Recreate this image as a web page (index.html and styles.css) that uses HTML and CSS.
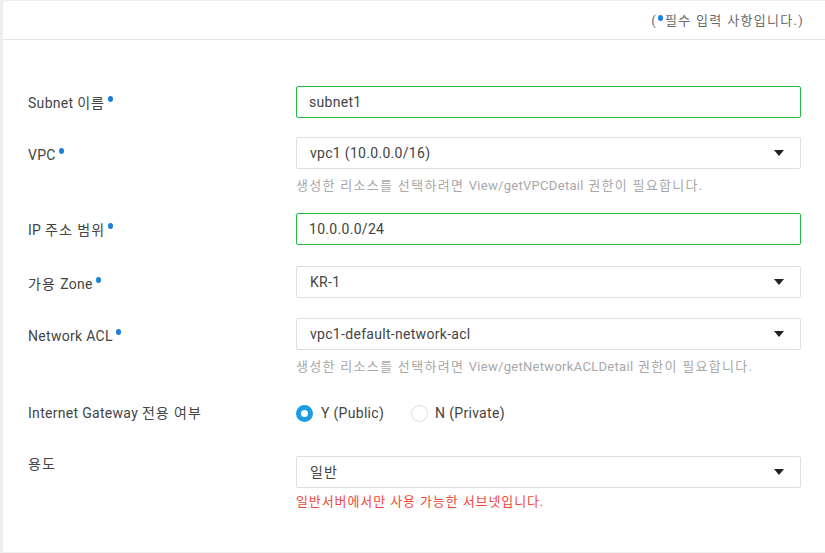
FILE: index.html
```html
<!DOCTYPE html>
<html lang="ko">
<head>
<meta charset="utf-8">
<link rel="stylesheet" href="styles.css">
</head>
<body>
<div class="page">
  <div class="head">
    <span class="req-note">(<span class="dot"></span><span class="ko">필수 입력 사항입니다.</span>)</span>
  </div>
  <div class="form">
    <div class="row r1">
      <div class="label">Subnet <span class="ko">이름</span><span class="dot"></span></div>
      <div class="field"><div class="input">subnet1</div></div>
    </div>
    <div class="row r2">
      <div class="label">VPC<span class="dot"></span></div>
      <div class="field">
        <div class="select">vpc1 (10.0.0.0/16)<span class="arrow"></span></div>
        <div class="help"><span class="ko">생성한 리소스를 선택하려면 </span>View/getVPCDetail<span class="ko"> 권한이 필요합니다.</span></div>
      </div>
    </div>
    <div class="row r3">
      <div class="label">IP <span class="ko">주소 범위</span><span class="dot"></span></div>
      <div class="field"><div class="input">10.0.0.0/24</div></div>
    </div>
    <div class="row r4">
      <div class="label"><span class="ko">가용 </span>Zone<span class="dot"></span></div>
      <div class="field"><div class="select">KR-1<span class="arrow"></span></div></div>
    </div>
    <div class="row r5">
      <div class="label">Network ACL<span class="dot"></span></div>
      <div class="field">
        <div class="select">vpc1-default-network-acl<span class="arrow"></span></div>
        <div class="help"><span class="ko">생성한 리소스를 선택하려면 </span>View/getNetworkACLDetail<span class="ko"> 권한이 필요합니다.</span></div>
      </div>
    </div>
    <div class="row r6">
      <div class="label">Internet Gateway <span class="ko">전용 여부</span></div>
      <div class="field radios">
        <label class="radio on"><span class="circle"></span>Y (Public)</label>
        <label class="radio"><span class="circle"></span>N (Private)</label>
      </div>
    </div>
    <div class="row r7">
      <div class="label"><span class="ko">용도</span></div>
      <div class="field">
        <div class="select"><span class="ko">일반</span><span class="arrow"></span></div>
        <div class="warn">일반서버에서만 사용 가능한 서브넷입니다.</div>
      </div>
    </div>
  </div>
</div>
</body>
</html>
```
FILE: styles.css
```css
* { box-sizing: border-box; }
html, body { margin: 0; padding: 0; }
body {
  background: #efefef;
  font-family: Roboto, "Noto Sans CJK KR", sans-serif;
  color: #444;
  font-size: 14px;
  letter-spacing: 0.3px;
  height: 553px;
  overflow: hidden;
}
.page {
  margin: 1px 0 0 3px;
  background: #fff;
  height: 551px;
  border-top-left-radius: 3px;
}
.head {
  height: 39px;
  border-bottom: 1px solid #e3e3e3;
  display: flex;
  justify-content: flex-end;
  align-items: center;
  padding-right: 22px;
}
.req-note {
  font-size: 13px;
  color: #6a6a6a;
  position: relative;
  top: -1px;
}
.ko { letter-spacing: 1px; }
.req-note .ko { letter-spacing: 1.3px; }
.help .ko { letter-spacing: 1.3px; }
.dot {
  display: inline-block;
  width: 5px;
  height: 6px;
  border-radius: 50%;
  background: #1a7fdc;
  vertical-align: 6px;
  margin: 0 2px 0 3px;
}
.req-note .dot { vertical-align: 4px; margin: 0 2px 0 2px; }
.form {
  padding: 46px 24px 0 25px;
}
.row {
  display: flex;
  align-items: flex-start;
}
.label {
  width: 268px;
  height: 32px;
  line-height: 36px;
  flex: none;
}
.r1 .label, .r3 .label { line-height: 34px; }
.r6 .label { line-height: 32px; }
.r7 .label { line-height: 16px; }
.field { flex: 1; }
.input, .select {
  height: 32px;
  border: 1px solid #dedede;
  border-radius: 2px;
  padding: 0 12px;
  line-height: 30px;
  position: relative;
}
.input { border-color: #22bb44; }
.select { padding-left: 13px; }
.arrow {
  position: absolute;
  right: 16px;
  top: 12px;
  width: 0;
  height: 0;
  border-left: 5px solid transparent;
  border-right: 5px solid transparent;
  border-top: 6px solid #222;
}
.help {
  margin-top: 7px;
  font-size: 13px;
  line-height: 19px;
  color: #a8a8a8;
}
.warn {
  margin-top: 5px;
  font-size: 13px;
  line-height: 18px;
  color: #f2483a;
  letter-spacing: 0.9px;
}
.r1 { margin-bottom: 19px; }
.r2 { margin-bottom: 18px; }
.r3 { margin-bottom: 21px; }
.r4 { margin-bottom: 20px; }
.r5 { margin-bottom: 21px; }
.r6 { margin-bottom: 27px; }
.radios {
  display: flex;
  align-items: center;
  height: 32px;
}
.radio {
  display: flex;
  align-items: center;
  margin-right: 27px;
}
.radio + .radio .circle { margin-right: 7px; }
.circle {
  width: 17px;
  height: 17px;
  border-radius: 50%;
  border: 1px solid #dcdcdc;
  margin-right: 8px;
  background: #fff;
}
.radio.on .circle {
  border: 5px solid #1a9de2;
}
```
